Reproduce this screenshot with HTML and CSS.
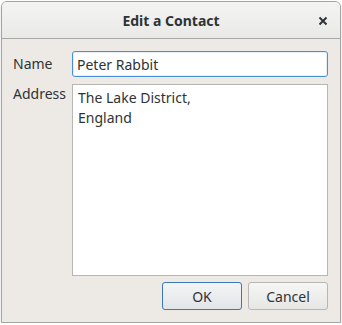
FILE: index.html
```html
<!DOCTYPE html>
<html lang="en">
<head>
  <meta charset="UTF-8">
  <title>Edit a Contact</title>
  <link rel="stylesheet" href="styles.css">
</head>
<body>

  <div class="window">
    <div class="titlebar">
      <span class="title">Edit a Contact</span>
      <button class="close" title="Close">
        <svg width="10" height="10" viewBox="0 0 10 10">
          <path d="M1.5 1.5 L8.5 8.5 M8.5 1.5 L1.5 8.5" stroke="#2e3436" stroke-width="2" fill="none"/>
        </svg>
      </button>
    </div>

    <div class="content">
      <div class="form">
        <label class="lbl" for="name">Name</label>
        <input class="field focused" id="name" type="text" value="Peter Rabbit">

        <label class="lbl lbl-top" for="address">Address</label>
        <textarea class="field area" id="address">The Lake District,
England</textarea>
      </div>

      <div class="actions">
        <button class="btn btn-default">OK</button>
        <button class="btn">Cancel</button>
      </div>
    </div>
  </div>

</body>
</html>
```
FILE: styles.css
```css
body { margin: 0; background: #ffffff; font-family: "Noto Sans", "DejaVu Sans", sans-serif; font-size: 14px; color: #2e3436; }

.window {
  margin: 1px 0 0 1px;
  width: 338px;
  height: 320px;
  border: 1px solid #a4a4a2;
  border-radius: 6px 6px 0 0;
  background: #edeae6;
  box-shadow: 0 1px 2px rgba(0, 0, 0, 0.2);
  display: flex;
  flex-direction: column;
  overflow: hidden;
}

.titlebar {
  height: 36px;
  border-bottom: 1px solid #a8a8a6;
  background: linear-gradient(#f4f4f3, #e9e9e8);
  display: flex;
  align-items: center;
  justify-content: center;
  position: relative;
}
.title { font-weight: bold; font-size: 14px; color: #2e3436; }
.close {
  position: absolute;
  right: 10px;
  top: 12px;
  width: 14px;
  height: 14px;
  padding: 0;
  border: none;
  background: none;
  display: flex;
  align-items: center;
  justify-content: center;
}

.content {
  flex: 1;
  padding: 12px 12px 12px 10px;
  display: flex;
  flex-direction: column;
}

.form {
  flex: 1;
  display: grid;
  grid-template-columns: 50px 1fr;
  grid-template-rows: 26px 1fr;
  column-gap: 10px;
  row-gap: 7px;
}
.lbl { line-height: 26px; padding-left: 1px; }
.lbl-top { line-height: 20px; }

.field {
  font-family: inherit;
  font-size: 14px;
  color: #2e3436;
  background: #ffffff;
  border: 1px solid #b8b6b2;
  margin: 0;
  box-sizing: border-box;
  outline: none;
}
input.field { height: 26px; padding: 0 4px; border-radius: 3px; }
.focused { border-color: #4a90d9; box-shadow: inset 0 0 0 1px rgba(74, 144, 217, 0.15); }
.area { resize: none; padding: 3px 5px 2px; line-height: 20px; border-radius: 0; }

.actions {
  display: flex;
  justify-content: flex-end;
  gap: 6px;
  margin-top: 6px;
}
.btn {
  width: 80px;
  height: 28px;
  font-family: inherit;
  font-size: 14px;
  color: #2e3436;
  border: 1px solid #b8b6b2;
  border-radius: 3px;
  background: linear-gradient(#f6f6f5, #e6e6e4);
}
.btn-default { border-color: #3a78b8; background: linear-gradient(#f3f4f5, #e2e5e8); }
```
